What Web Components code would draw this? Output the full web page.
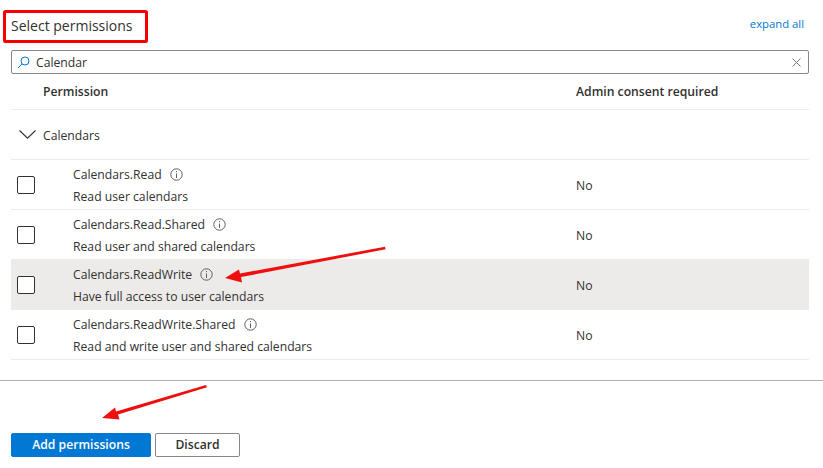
<!DOCTYPE html>
<html>
<head>
<meta charset="utf-8">
<title>Select permissions</title>
<style>
  html, body { margin: 0; padding: 0; background: #fff; }
  body { font-family: "Open Sans", "Noto Sans", sans-serif; font-size: 12.2px; color: #323130; position: relative; height: 468px; overflow: hidden; }
</style>
</head>
<body>
<perm-page>
  <perm-title slot="top" link="expand all">Select permissions</perm-title>
  <perm-search slot="top" value="Calendar"></perm-search>
  <perm-head slot="top" first="Permission" second="Admin consent required"></perm-head>
  <perm-group slot="top">Calendars</perm-group>
  <perm-row slot="top" name="Calendars.Read" desc="Read user calendars" consent="No"></perm-row>
  <perm-row slot="top" name="Calendars.Read.Shared" desc="Read user and shared calendars" consent="No"></perm-row>
  <perm-row slot="top" name="Calendars.ReadWrite" desc="Have full access to user calendars" consent="No" hovered></perm-row>
  <perm-row slot="top" name="Calendars.ReadWrite.Shared" desc="Read and write user and shared calendars" consent="No"></perm-row>
  <perm-button slot="actions" primary>Add permissions</perm-button>
  <perm-button slot="actions">Discard</perm-button>
</perm-page>
<perm-marks></perm-marks>

<script>
class PermPage extends HTMLElement {
  constructor() {
    super();
    this.attachShadow({mode: "open"}).innerHTML = `
      <style>
        :host { display: block; }
        .top { padding: 0 14px 0 11px; display: flex; flex-direction: column; }
        .actions { border-top: 1px solid #b3b0ad; margin-top: 20px; padding: 52px 0 0 11px; display: flex; gap: 4px; }
      </style>
      <div class="top"><slot name="top"></slot></div>
      <div class="actions"><slot name="actions"></slot></div>`;
  }
}

class PermTitle extends HTMLElement {
  constructor() {
    super();
    this.attachShadow({mode: "open"}).innerHTML = `
      <style>
        :host { display: flex; justify-content: space-between; height: 50px; box-sizing: border-box; }
        .title { font-size: 14px; line-height: 20px; margin-top: 16px; }
        a { font-size: 11.3px; line-height: 16px; margin: 16px 5px 0 0; color: #0078d4; }
      </style>
      <div class="title"><slot></slot></div>
      <a>${this.getAttribute("link")}</a>`;
  }
}

class PermSearch extends HTMLElement {
  constructor() {
    super();
    this.attachShadow({mode: "open"}).innerHTML = `
      <style>
        :host { display: flex; align-items: center; height: 24px; box-sizing: border-box; border: 1px solid #8a8886; border-radius: 2px; padding: 0 7px 0 5px; }
        svg { flex: none; display: block; }
        .value { flex: 1; margin-left: 6px; line-height: 20px; padding-top: 1px; }
      </style>
      <svg width="13" height="13" viewBox="0 0 13 13" fill="none" stroke="#0078d4" stroke-width="1">
        <circle cx="8" cy="5" r="4"/><path d="M5.2 7.8 L1 12"/>
      </svg>
      <span class="value">${this.getAttribute("value")}</span>
      <svg width="9" height="9" viewBox="0 0 9 9" fill="none" stroke="#797775" stroke-width="1">
        <path d="M.5 .5 L8.5 8.5 M8.5 .5 L.5 8.5"/>
      </svg>`;
  }
}

class PermHead extends HTMLElement {
  constructor() {
    super();
    this.attachShadow({mode: "open"}).innerHTML = `
      <style>
        :host { display: grid; grid-template-columns: 533px 1fr; height: 36px; box-sizing: border-box; border-bottom: 1px solid #edebe9; font-weight: 600; align-items: center; padding: 0 0 0 32px; }
      </style>
      <span>${this.getAttribute("first")}</span>
      <span>${this.getAttribute("second")}</span>`;
  }
}

class PermGroup extends HTMLElement {
  constructor() {
    super();
    this.attachShadow({mode: "open"}).innerHTML = `
      <style>
        :host { display: flex; align-items: center; height: 50px; box-sizing: border-box; border-bottom: 1px solid #edebe9; padding: 0 0 0 8px; }
        svg { display: block; margin-right: 7px; }
        span { padding-top: 2px; }
      </style>
      <svg width="17" height="9" viewBox="0 0 17 9" fill="none" stroke="#323130" stroke-width="1.1">
        <path d="M.5 .5 L8.5 8.2 L16.5 .5"/>
      </svg>
      <span><slot></slot></span>`;
  }
}

class PermRow extends HTMLElement {
  constructor() {
    super();
    this.attachShadow({mode: "open"}).innerHTML = `
      <style>
        :host { display: grid; grid-template-columns: 62px 503px 1fr; height: 50px; box-sizing: border-box; border-bottom: 1px solid #edebe9; align-items: center; }
        :host([hovered]) { background: #edebe9; }
        .box { width: 18px; height: 18px; box-sizing: border-box; border: 1px solid #323130; border-radius: 2px; background: #fff; margin-left: 6px; }
        .text { padding-top: 2px; }
        .name { display: flex; align-items: center; gap: 8px; line-height: 22px; }
        .desc { line-height: 22px; }
        .consent { padding-top: 2px; }
        svg { display: block; }
      </style>
      <div class="box"></div>
      <div class="text">
        <div class="name">
          <span>${this.getAttribute("name")}</span>
          <svg width="13" height="13" viewBox="0 0 13 13" fill="none" stroke="#605e5c">
            <circle cx="6.5" cy="6.5" r="5.7"/><path d="M6.5 5.5 V10 M6.5 3 V4.2"/>
          </svg>
        </div>
        <div class="desc">${this.getAttribute("desc")}</div>
      </div>
      <div class="consent">${this.getAttribute("consent")}</div>`;
  }
}

class PermButton extends HTMLElement {
  constructor() {
    super();
    this.attachShadow({mode: "open"}).innerHTML = `
      <style>
        :host { display: flex; align-items: center; justify-content: center; height: 24px; box-sizing: border-box; width: 85px; border: 1px solid #8a8886; border-radius: 2px; font-weight: 600; padding-bottom: 2px; }
        :host([primary]) { width: 140px; background: #0078d4; border-color: #0078d4; color: #fff; }
      </style>
      <slot></slot>`;
  }
}

class PermMarks extends HTMLElement {
  constructor() {
    super();
    this.attachShadow({mode: "open"}).innerHTML = `
      <style>
        :host { position: absolute; left: 0; top: 0; width: 823px; height: 468px; pointer-events: none; }
        svg { display: block; }
      </style>
      <svg width="823" height="468" viewBox="0 0 823 468" fill="#f00f0f">
        <rect x="4.5" y="11.5" width="142" height="30" rx="1" fill="none" stroke="#f80000" stroke-width="3"/>
        <path d="M385.6 249.3 L385 246.8 L240 273.5 L239 269.5 L225 278 L242 282.5 L241 277 Z"/>
        <path d="M207 387.3 L206 385 L116 411.5 L115 407.5 L102 418 L119.5 419.5 L118 414.5 Z"/>
      </svg>`;
  }
}

customElements.define("perm-page", PermPage);
customElements.define("perm-title", PermTitle);
customElements.define("perm-search", PermSearch);
customElements.define("perm-head", PermHead);
customElements.define("perm-group", PermGroup);
customElements.define("perm-row", PermRow);
customElements.define("perm-button", PermButton);
customElements.define("perm-marks", PermMarks);
</script>
</body>
</html>
